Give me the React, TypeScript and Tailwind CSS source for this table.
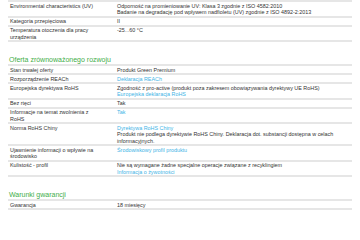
type Cell = { text?: string; link?: boolean };
type Row = { label: string; values: Cell[] };

const envRows: Row[] = [
  {
    label: 'Environmental characteristics (UV)',
    values: [
      { text: 'Odporność na promieniowanie UV: Klasa 3 zgodnie z ISO 4582:2010' },
      { text: 'Badanie na degradację pod wpływem nadfioletu (UV) zgodnie z ISO 4892-2:2013' },
    ],
  },
  { label: 'Kategoria przepięciowa', values: [{ text: 'II' }] },
  { label: 'Temperatura otoczenia dla pracy urządzenia', values: [{ text: '-25...60 °C' }] },
];

const sustainRows: Row[] = [
  { label: 'Stan trwałej oferty', values: [{ text: 'Produkt Green Premium' }] },
  { label: 'Rozporządzenie REACh', values: [{ text: 'Deklaracja REACh', link: true }] },
  {
    label: 'Europejska dyrektywa RoHS',
    values: [
      { text: 'Zgodność z pro-active (produkt poza zakresem obowiązywania dyrektywy UE RoHS)' },
      { text: 'Europejska deklaracja RoHS', link: true },
    ],
  },
  { label: 'Bez rtęci', values: [{ text: 'Tak' }] },
  { label: 'Informacje na temat zwolnienia z RoHS', values: [{ text: 'Tak', link: true }] },
  {
    label: 'Norma RoHS Chiny',
    values: [
      { text: 'Dyrektywa RoHS Chiny', link: true },
      { text: 'Produkt nie podlega dyrektywie RoHS Chiny. Deklaracja dot. substancji dostępna w celach informacyjnych.' },
    ],
  },
  {
    label: 'Ujawnienie informacji o wpływie na środowisko',
    values: [{ text: 'Środowiskowy profil produktu', link: true }],
  },
  {
    label: 'Kulistość - profil',
    values: [
      { text: 'Nie są wymagane żadne specjalne operacje związane z recyklingiem' },
      { text: 'Informacja o żywotności', link: true },
    ],
  },
];

const warrantyRows: Row[] = [{ label: 'Gwarancja', values: [{ text: '18 miesięcy' }] }];

function SpecTable({ rows }: { rows: Row[] }) {
  return (
    <div className="border-t-2 border-[#e6e6e6]">
      {rows.map((row) => (
        <div key={row.label} className="flex border-b-2 border-[#e6e6e6] pt-[0.5px]">
          <div className="w-[107px] shrink-0 pl-[2px] pr-[14px]">{row.label}</div>
          <div className="w-[235px] pl-[2px]">
            {row.values.map((v, i) => (
              <div key={i} className={v.link ? 'text-[#42b4e6]' : ''}>
                {v.text}
              </div>
            ))}
          </div>
        </div>
      ))}
    </div>
  );
}

function SectionTitle({ children }: { children: string }) {
  return <h2 className="mt-[13px] pl-[1px] text-[7px] leading-[9px] text-[#3fae49]">{children}</h2>;
}

export default function App() {
  return (
    <div className="h-[240px] w-[360px] overflow-hidden bg-white px-2 font-['Liberation_Sans',Arial,sans-serif] text-[5.4px] leading-[6.5px] text-[#333]">
      <SpecTable rows={envRows} />
      <SectionTitle>Oferta zrównoważonego rozwoju</SectionTitle>
      <SpecTable rows={sustainRows} />
      <SectionTitle>Warunki gwarancji</SectionTitle>
      <SpecTable rows={warrantyRows} />
    </div>
  );
}
